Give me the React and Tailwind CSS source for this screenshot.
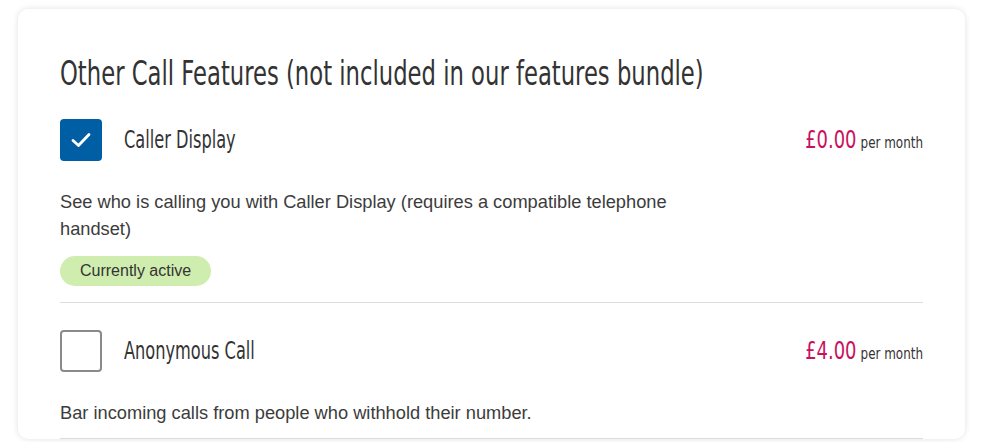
import React from "react";

const condensed = {
  fontFamily: '"DejaVu Sans Condensed", "DejaVu Sans", sans-serif',
};
const body = { fontFamily: '"Liberation Sans", Arial, sans-serif' };

function Checkbox({ checked }) {
  if (checked) {
    return (
      <div className="flex h-[42px] w-[42px] shrink-0 items-center justify-center rounded-[4px] bg-[#005ea5]">
        <svg width="20" height="16" viewBox="0 0 20 16" fill="none">
          <path d="M2 8.5 L7.5 13.5 L18 2.5" stroke="#fff" strokeWidth="2.8" strokeLinecap="round" strokeLinejoin="round" />
        </svg>
      </div>
    );
  }
  return <div className="h-[42px] w-[42px] shrink-0 rounded-[4px] border-2 border-[#8a8a8a] bg-white" />;
}

function Feature({ checked, title, price, desc, active }) {
  return (
    <div className="border-b border-[#dddddd]">
      <div className="flex items-center">
        <Checkbox checked={checked} />
        <div className="ml-[22px] flex-1 text-[24px] leading-[30px] text-[#333]" style={condensed}>
          <span className="inline-block origin-left scale-x-[0.75] whitespace-nowrap">{title}</span>
        </div>
        <div className="whitespace-nowrap" style={condensed}>
          <span className="inline-flex origin-right scale-x-[0.83] items-baseline">
            <span className="text-[24px] leading-[30px] text-[#c8125e]">{price}</span>
            <span className="ml-[5px] text-[16px] text-[#333]">per month</span>
          </span>
        </div>
      </div>
      <p className="mt-[27px] max-w-[640px] text-[18.25px] leading-[27px] text-[#3c3c3c]" style={body}>
        {desc}
      </p>
      {active ? (
        <div className="mt-[14px] mb-[16px] inline-flex h-[30px] items-center rounded-full bg-[#d0edb0] px-[20px] text-[16px] text-[#333]" style={body}>
          Currently active
        </div>
      ) : (
        <div className="h-[12px]" />
      )}
    </div>
  );
}

export default function App() {
  return (
    <div className="h-[442px] w-[998px] overflow-hidden bg-white pl-[18px] pt-[9px]">
      <div className="w-[947px] rounded-[10px] bg-white px-[42px] pt-[47px] shadow-[0_0_6px_rgba(0,0,0,0.12)]">
        <h2 className="text-[33px] leading-[36px] text-[#333]" style={condensed}>
          <span className="inline-block origin-left scale-x-[0.765] whitespace-nowrap">
            Other Call Features (not included in our features bundle)
          </span>
        </h2>
        <div className="mt-[27px] flex flex-col gap-[27px]">
          <Feature
            checked
            title="Caller Display"
            price="£0.00"
            desc="See who is calling you with Caller Display (requires a compatible telephone handset)"
            active
          />
          <Feature
            title="Anonymous Call"
            price="£4.00"
            desc="Bar incoming calls from people who withhold their number."
          />
        </div>
      </div>
    </div>
  );
}
